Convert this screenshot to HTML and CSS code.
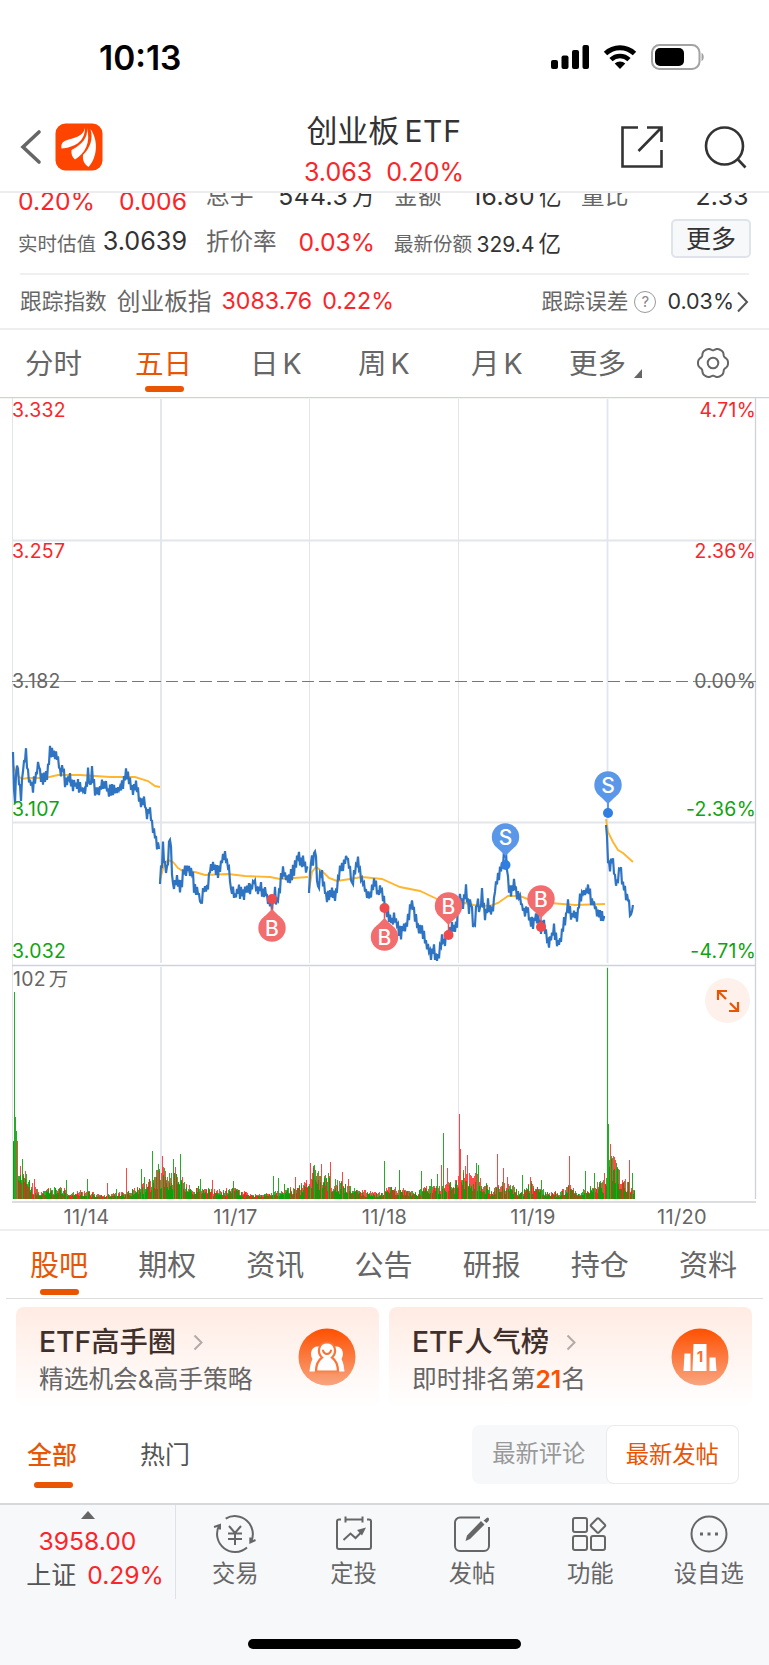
FILE: index.html
```
<!DOCTYPE html>
<html lang="zh-CN">
<head>
	<meta charset="UTF-8">
	<meta name="viewport" content="width=device-width, initial-scale=1.0">
	<title>创业板ETF</title>
	<link rel="stylesheet" href="styles.css">
</head>
<body>
	<div class="status">
		<span class="status__time">10:13</span>
		<div class="status__icons">
			<svg width="38" height="26" viewBox="0 0 38 26">
				<rect x="0" y="16" width="7" height="9" rx="2" />
				<rect x="10.5" y="11.500" width="7" height="13.500" rx="2" />
				<rect x="21" y="6" width="7" height="19" rx="2" />
				<rect x="31.500" y="1" width="6.500" height="24" rx="2" />
			</svg>
			<svg width="34" height="26" viewBox="0 0 34 26">
				<path d="M2.500 9.500a21 21 0 0 1 29 0" fill="none" stroke="#000" stroke-width="5" />
				<path d="M8 15.600a13 13 0 0 1 18 0" fill="none" stroke="#000" stroke-width="4.600" />
				<path d="M17 25l-5.300-5.400a7.800 7.800 0 0 1 10.600 0z" />
			</svg>
			<svg width="53" height="26" viewBox="0 0 53 26">
				<rect x="1" y="1" width="47.500" height="24" rx="7.500" fill="none" stroke="#a3a3a3" stroke-width="2" />
				<rect x="4" y="4" width="29" height="18" rx="5" />
				<path d="M50.500 9v8c3-1 3-7 0-8z" fill="#a3a3a3" />
			</svg>
		</div>
	</div>

	<header class="header">
		<div class="header__left">
			<svg width="22" height="36" viewBox="0 0 22 36">
				<path d="M19 3L3 18l16 15" fill="none" stroke="#666" stroke-width="3.600" stroke-linecap="round" />
			</svg>
			<svg width="48" height="48" viewBox="0 0 48 48">
				<rect x="0.500" y="0.500" width="47" height="47" rx="10" fill="#ff4400" />
				<path d="M30 5C28 14 18 15 11 17.500C7 19 6 21 6.500 25.500C19 24.500 30 19 30 5z" fill="#fff" />
				<path d="M32 5C33 14 28 21 16.500 27C16 31 17 34 20 36.500C30 30 36 20 32 5z" fill="#fff" />
				<path d="M35.500 6C38.500 16 35 25 28 32C27.500 37 29 41 33.500 44C42 35 44 18 35.500 6z" fill="#fff" />
			</svg>
		</div>
		<div class="header__title">
			<h1>创业板<span>ETF</span></h1>
			<p class="red"><span>3.063</span><span>0.20%</span></p>
		</div>
		<div class="header__right">
			<svg width="44" height="44" viewBox="0 0 44 44" fill="none" stroke="#333" stroke-width="2.600">
				<path d="M18 2.500H2.500v39h39V25M27 2.500h14.500V17M41.500 2.500L18.500 26" />
			</svg>
			<svg width="44" height="44" viewBox="0 0 44 44" fill="none" stroke="#333" stroke-width="2.600">
				<circle cx="20.500" cy="21" r="18.500" />
				<path d="M33.500 34l8 8.500" />
			</svg>
		</div>
	</header>

	<section class="quote">
		<div class="quote__row quote__row--top">
			<div class="cell cell--big red"><span>0.20%</span><span>0.006</span></div>
			<div class="cell"><label>总手</label><span>544.3<i>万</i></span></div>
			<div class="cell"><label>金额</label><span>16.80<i>亿</i></span></div>
			<div class="cell"><label>量比</label><span>2.33</span></div>
		</div>
		<div class="quote__row">
			<div class="cell cell--value"><label class="small">实时估值</label><span>3.0639</span></div>
			<div class="cell"><label>折价率</label><span class="red">0.03%</span></div>
			<div class="cell cell--share"><label class="small">最新份额</label><span>329.4<i>亿</i></span></div>
			<div class="cell cell--more"><button class="more">更多</button></div>
		</div>
	</section>
	<hr class="line">

	<section class="track">
		<div class="track__left">
			<label>跟踪指数</label>
			<span class="track__name">创业板指</span>
			<span class="red">3083.76</span>
			<span class="red">0.22%</span>
		</div>
		<div class="track__right">
			<label>跟踪误差</label>
			<span class="help">?</span>
			<span class="track__value">0.03%</span>
			<svg width="13" height="22" viewBox="0 0 13 22" fill="none" stroke="#555" stroke-width="2">
				<path d="M2 1.500L11 11L2 20.500" />
			</svg>
		</div>
	</section>

	<nav class="period">
		<a class="period__item">分时</a>
		<a class="period__item active">五日</a>
		<a class="period__item">日 K</a>
		<a class="period__item">周 K</a>
		<a class="period__item">月 K</a>
		<a class="period__item period__item--more">更多<svg width="8" height="9" viewBox="0 0 8 9"><path d="M8 0v9H0z" fill="#666" /></svg></a>
		<a class="period__item">
			<svg width="32" height="32" viewBox="-16 -16 32 32" fill="none" stroke="#666" stroke-width="2">
				<path id="gear" />
				<circle r="5.300" />
			</svg>
		</a>
	</nav>

	<section class="chart">
		<svg width="769" height="833" viewBox="0 397 769 833">
			<g class="grid">
				<path d="M12.500 397V1199M309.500 399V963M309.500 967V1199M458.500 399V963M458.500 967V1199" />
				<path class="grid__bold" d="M161 399V963M161 967V1199M607.500 399V963M607.500 967V1199M12 540.500H756M12 822.500H756" />
				<path class="grid__frame" d="M0 397.500H769M12 965.500H756M755.500 397V1199" />
				<path class="grid__frame" d="M12 1202H756" />
			</g>
			<path d="M64 681.500H694" stroke="#777" stroke-width="1.200" stroke-dasharray="12 5" />
			<path d="M12 681.500H64M694 681.500H756" stroke="#888" stroke-width="1.200" />
			<g id="volume"></g>
			<path id="average" class="average" />
			<path id="price" class="price" />
			<g id="marks"></g>
			<g class="axis">
				<text class="up" x="12" y="417">3.332</text>
				<text class="up" x="12" y="558">3.257</text>
				<text x="12" y="688">3.182</text>
				<text class="down" x="12" y="816">3.107</text>
				<text class="down" x="12" y="958">3.032</text>
				<text x="13" y="986">102<tspan dx="3">万</tspan></text>
				<text class="up end" x="756" y="417">4.71%</text>
				<text class="up end" x="756" y="558">2.36%</text>
				<text class="end" x="756" y="688">0.00%</text>
				<text class="down end" x="756" y="816">-2.36%</text>
				<text class="down end" x="756" y="958">-4.71%</text>
				<text class="date" x="86.500" y="1223.500">11/14</text>
				<text class="date" x="235.500" y="1223.500">11/17</text>
				<text class="date" x="384.500" y="1223.500">11/18</text>
				<text class="date" x="533" y="1223.500">11/19</text>
				<text class="date" x="682" y="1223.500">11/20</text>
			</g>
		</svg>
		<button class="expand">
			<svg width="24" height="24" viewBox="0 0 24 24" fill="none" stroke="#ea5504" stroke-width="2.200">
				<path d="M2 11V2H11M2.500 2.500L10 10M22 13V22H13M21.500 21.500L14 14" />
			</svg>
		</button>
	</section>

	<nav class="sections">
		<a class="sections__item active">股吧</a>
		<a class="sections__item">期权</a>
		<a class="sections__item">资讯</a>
		<a class="sections__item">公告</a>
		<a class="sections__item">研报</a>
		<a class="sections__item">持仓</a>
		<a class="sections__item">资料</a>
	</nav>

	<section class="cards">
		<div class="card">
			<div>
				<h2>ETF高手圈<svg width="10" height="17" viewBox="0 0 10 17"><path d="M1.500 1.500l7 7-7 7" fill="none" stroke="#b3aaa7" stroke-width="2" /></svg></h2>
				<p>精选机会&amp;高手策略</p>
			</div>
			<svg width="58" height="58" viewBox="0 0 58 58">
				<defs>
					<linearGradient id="orange" x1="0" y1="0" x2="0" y2="1">
						<stop offset="0" stop-color="#ff5000" />
						<stop offset="1" stop-color="#f8a580" />
					</linearGradient>
				</defs>
				<circle cx="29" cy="29" r="28.500" fill="url(#orange)" />
				<path d="M20 18.500c-6-.500-9 7-5.500 12.500-2 4-2.500 8-3 12.500h35c-.500-4.500-1-8.500-3-12.500C47 25.500 44 18 38 18.500z" fill="#fff" />
				<path d="M24 29.500C19 25 20 14.500 29 14.500s10 10.500 5 15c4 3 6 8 6 14H18c0-6 2-11 6-14z" fill="#fff" stroke="#fc7438" stroke-width="2.200" />
				<path d="M17 44.500h24" stroke="#fa8a58" stroke-width="2" />
				<path d="M25 22.500c1 4.500 7 4.500 8 0" fill="none" stroke="#fb6f30" stroke-width="2" stroke-linecap="round" />
			</svg>
		</div>
		<div class="card">
			<div>
				<h2>ETF人气榜<svg width="10" height="17" viewBox="0 0 10 17"><path d="M1.500 1.500l7 7-7 7" fill="none" stroke="#b3aaa7" stroke-width="2" /></svg></h2>
				<p>即时排名第<b>21</b>名</p>
			</div>
			<svg width="58" height="58" viewBox="0 0 58 58">
				<circle cx="29" cy="29" r="28.500" fill="url(#orange)" />
				<path d="M13.500 25.500h6V43h-7zM22.500 16h13v27h-14zM38.500 29.500h6l1 13.500h-7z" fill="#fff" />
				<text class="rank" x="29" y="34">1</text>
			</svg>
		</div>
	</section>

	<section class="filter">
		<nav class="filter__tabs">
			<a class="active">全部</a>
			<a>热门</a>
		</nav>
		<div class="switch">
			<span>最新评论</span>
			<span class="switch__on">最新发帖</span>
		</div>
	</section>

	<footer class="bottom">
		<div class="bottom__row">
			<div class="index">
				<svg width="14" height="8" viewBox="0 0 14 8"><path d="M7 0l7 8H0z" fill="#666" /></svg>
				<p class="red">3958.00</p>
				<p>上证 <span class="red">0.29%</span></p>
			</div>
			<div class="actions">
				<a class="action">
					<svg width="44" height="40" viewBox="0 0 44 40">
						<path d="M12.700 4.600A18 18 0 0 1 38.200 27.600M34 33.400A18 18 0 0 1 6 11.800M1 13l6-2v4.500M37.300 23.500V28.500L42.500 26" />
						<path d="M16 12l6 7 6-7M22 19v12M15 19.500h14M15 25h14" />
					</svg>
					交易
				</a>
				<a class="action">
					<svg width="44" height="40" viewBox="0 0 44 40">
						<path d="M9 5.500H7a2 2 0 0 0-2 2V33a2 2 0 0 0 2 2h30a2 2 0 0 0 2-2V7.500a2 2 0 0 0-2-2h-2M13.500 2.500v6M30.500 2.500v6M14 5.500h16" />
						<path d="M11.500 26l7-6.500 5 4.500 8-8" />
						<path d="M25 16l9-2.500-4 8z" fill="#666" stroke="none" />
					</svg>
					定投
				</a>
				<a class="action">
					<svg width="44" height="40" viewBox="0 0 44 40">
						<path d="M30 3.500H10a5 5 0 0 0-5 5V32a5 5 0 0 0 5 5h24a5 5 0 0 0 5-5V13" />
						<path d="M31 7l3.500 3.500L20 25l-4.500 2L17 21.500zM35 5.500c1-1 1.500-2 3-2 1.500 1 1 2.500.500 3.500L36.500 9 33.500 6.500z" fill="#666" stroke="none" />
					</svg>
					发帖
				</a>
				<a class="action">
					<svg width="44" height="40" viewBox="0 0 44 40">
						<rect x="5" y="4" width="14" height="14" rx="2" />
						<rect x="5" y="22" width="14" height="14" rx="2" />
						<rect x="23" y="22" width="14" height="14" rx="2" />
						<rect x="24.500" y="6" width="11" height="11" rx="1.500" transform="rotate(45 30 11.500)" />
					</svg>
					功能
				</a>
				<a class="action">
					<svg width="44" height="40" viewBox="0 0 44 40">
						<circle cx="22" cy="20" r="17.500" />
						<path d="M13 20h3M20.500 20h3M28 20h3" stroke-width="3" />
					</svg>
					设自选
				</a>
			</div>
		</div>
		<div class="home"></div>
	</footer>
	<script src="chart.js"></script>
</body>
</html>
```
FILE: styles.css
```
*,
*::before,
*::after {
	box-sizing: border-box;
	margin: 0;
	padding: 0;
	border: none;
}

body {
	width: 769px;
	font-family: Inter, "Noto Sans CJK SC", sans-serif;
	font-size: 24px;
	line-height: 1;
	color: #333;
	background-color: #fff;
}

svg {
	display: block;
	flex-shrink: 0;
}

h1,
h2,
i,
button {
	font-family: inherit;
	font-weight: inherit;
	font-size: inherit;
	font-style: normal;
}

a,
label,
span {
	white-space: nowrap;
}

.red {
	color: #fb2529;
}

/* status bar */
.status {
	height: 108px;
	padding: 38px 65px 0 99px;
	display: flex;
	justify-content: space-between;
}

.status__time {
	font-size: 33.500px;
	font-weight: 600;
	line-height: 40px;
	color: #000;
}

.status__icons {
	display: flex;
	gap: 14px;
	padding-top: 6px;
}

/* header */
.header {
	height: 85px;
	padding: 0 21px 0 20px;
	display: grid;
	grid-template-columns: 1fr auto 1fr;
	border-bottom: 2px solid #ececee;
}

.header__left,
.header__right {
	display: flex;
	align-items: center;
	padding-bottom: 5px;
}

.header__left {
	gap: 13px;
}

.header__right {
	justify-content: flex-end;
	gap: 40px;
}

.header__title {
	text-align: center;
}

.header__title h1 {
	height: 50px;
	padding-top: 7px;
	font-size: 31px;
	line-height: 32px;
}

.header__title h1 span {
	margin-left: 5px;
	font-size: 30px;
	letter-spacing: 0.7px;
}

.header__title p {
	display: flex;
	justify-content: center;
	gap: 14px;
	font-size: 25px;
	line-height: 29px;
}

/* quote */
.quote {
	height: 80px;
	padding: 0 17px 0 18px;
	overflow: hidden;
}

.quote__row {
	height: 46px;
	display: grid;
	grid-template-columns: 169px 169px 168px 168px;
	column-gap: 19px;
	align-items: center;
}

.quote__row--top {
	margin-top: -20px;
}

.cell {
	display: flex;
	justify-content: space-between;
	align-items: center;
	font-size: 24.700px;
}

.cell label {
	color: #666;
	font-size: 23.5px;
}

.cell i {
	margin-left: 4px;
	font-size: 22.500px;
}

.cell--big {
	padding-top: 11px;
}

.quote__row--top .cell:not(.cell--big) {
	font-size: 24.700px;
	letter-spacing: 0.4px;
}

.cell--value {
	font-size: 25.200px;
}

.cell .small {
	font-size: 19.5px;
	padding-top: 5px;
}

.cell--share {
	padding-right: 1px;
}

.cell--share span {
	font-size: 21px;
	padding-top: 4px;
}

.cell--more {
	justify-content: flex-end;
	padding-bottom: 7px;
	margin-right: -2px;
}

.more {
	width: 80px;
	height: 39px;
	font-size: 25px;
	line-height: 34px;
	color: #333;
	background-color: #f7f8fa;
	border: 2px solid #e0e4ea;
	border-radius: 5px;
}

.line {
	height: 2px;
	margin: 0 20px;
	background-color: #f0f0f0;
}

/* tracked index */
.track {
	height: 55px;
	padding: 0 20px;
	display: flex;
	justify-content: space-between;
	border-bottom: 2px solid #eee;
}

.track__left,
.track__right {
	display: flex;
	align-items: center;
	color: #666;
	font-size: 23.200px;
}

.track label {
	font-size: 21.700px;
}

.track__left {
	gap: 10px;
}

.track .red {
	color: #fb2529;
}

.track__name {
	font-size: 23.700px;
}

.track__right {
	gap: 6px;
}

.help {
	width: 22px;
	height: 22px;
	border: 1.500px solid #999;
	border-radius: 50%;
	font-size: 15px;
	line-height: 19px;
	text-align: center;
	color: #888;
}

.track__value {
	margin: 0 -4px 0 5px;
	font-size: 21.500px;
	color: #333;
}

/* chart period tabs */
.period {
	height: 67px;
	padding: 0 40px 0 25px;
	display: grid;
	grid-template-columns: 110px 115px 108px 113px 98px 1fr auto;
	font-size: 28.500px;
	word-spacing: -4px;
	color: #666;
}

.period__item {
	display: flex;
	flex-direction: column;
	align-items: flex-start;
	padding-top: 17px;
	line-height: 33px;
}

.period__item.active {
	color: #ea5504;
}

.active::after {
	content: "";
	display: block;
	width: 39px;
	height: 6px;
	border-radius: 3px;
	background-color: #ea5504;
}

.period .active::after {
	margin: 6px 0 0 10px;
}

.period__item--more {
	flex-direction: row;
	gap: 8px;
}

.period__item--more svg {
	margin-top: 22px;
}

/* chart */
.chart {
	position: relative;
	height: 834px;
	border-bottom: 2px solid #eee;
}

.grid {
	fill: none;
	stroke: #e3e5ed;
	stroke-width: 1;
}

.grid__bold {
	stroke-width: 1.800;
}

.grid__frame {
	stroke: #cfd2da;
	stroke-width: 1.300;
}

.price {
	fill: none;
	stroke: #2f74c3;
	stroke-width: 2.200;
}

.average {
	fill: none;
	stroke: #ffb62e;
	stroke-width: 1.900;
}

.axis {
	font-size: 19.400px;
	letter-spacing: 0.3px;
	fill: #666;
}

.axis .up {
	fill: #fb2529;
}

.axis .down {
	fill: #0fa30f;
}

.axis .end {
	text-anchor: end;
}

.axis .date {
	font-size: 20px;
	text-anchor: middle;
}

.mark {
	font-size: 21px;
	font-weight: 500;
	text-anchor: middle;
	fill: #fff;
}

.expand {
	position: absolute;
	left: 705px;
	top: 581px;
	width: 45px;
	height: 45px;
	border-radius: 50%;
	background-color: #fef1eb;
	display: flex;
	align-items: center;
	justify-content: center;
}

/* section tabs */
.sections {
	height: 68px;
	margin: 0 6px;
	padding: 0 26px 0 24px;
	display: flex;
	justify-content: space-between;
	border-bottom: 1px solid #ddd;
	font-size: 29px;
	color: #666;
}

.sections__item {
	padding-top: 18px;
	line-height: 34px;
}

.sections .active {
	color: #ea5504;
}

.sections .active::after {
	margin: 6px 0 0 10px;
}

/* cards */
.cards {
	padding: 8px 17px 0 16px;
	display: grid;
	grid-template-columns: 1fr 1fr;
	gap: 10px;
	height: 109px;
}

.card {
	display: flex;
	justify-content: space-between;
	padding: 19px 23px 0 23px;
	border-radius: 8px;
	background: linear-gradient(#ffebe3, #fff);
}

.card > svg {
	margin-top: 2px;
}

.card h2 {
	display: flex;
	align-items: center;
	font-size: 28.300px;
	font-weight: 500;
	line-height: 32px;
	color: #40302b;
}

.card h2 svg {
	margin-left: 17px;
}

.card p {
	margin-top: 5px;
	font-size: 24.700px;
	line-height: 32px;
	color: #666;
}

.card b {
	font-weight: 600;
	color: #ff5000;
}

.rank {
	font-size: 15px;
	font-weight: 700;
	text-anchor: middle;
	fill: #fb6f30;
}

/* posts filter */
.filter {
	height: 95px;
	padding: 17px 30px 0 27px;
	display: flex;
	justify-content: space-between;
}

.filter__tabs {
	display: flex;
	gap: 63px;
	font-size: 25px;
	line-height: 30px;
	color: #555;
	padding-top: 15px;
}

.filter__tabs .active {
	font-weight: 500;
	color: #ea5504;
}

.filter__tabs .active::after {
	margin: 12px 0 0 7px;
}

.switch {
	width: 267px;
	height: 59px;
	display: flex;
	font-size: 23.300px;
	line-height: 58px;
	color: #999;
	background-color: #f7f8fa;
	border-radius: 8px;
}

.switch span {
	width: 134px;
	text-align: center;
}

.switch .switch__on {
	color: #ea5504;
	background-color: #fff;
	border: 1.500px solid #ebebed;
	border-radius: 8px;
}

/* bottom bar */
.bottom {
	height: 162px;
	background-color: #f7f8fa;
	border-top: 2px solid #d5d8dd;
}

.bottom__row {
	display: flex;
	height: 94px;
}

.index {
	width: 176px;
	border-right: 1px solid #dfe1e6;
	display: flex;
	flex-direction: column;
	align-items: center;
	padding-top: 6px;
	font-size: 25px;
	color: #555;
}

.index p {
	line-height: 34px;
}

.index .red {
	font-size: 24.700px;
}

.index svg + p {
	margin-top: 5px;
}

.index p:last-child {
	padding-left: 15px;
}

.index span {
	margin-left: 4px;
}

.actions {
	flex: 1;
	display: grid;
	grid-template-columns: repeat(5, 118.400px);
}

.action {
	display: flex;
	flex-direction: column;
	align-items: center;
	padding-top: 9px;
	font-size: 23.300px;
	line-height: 30px;
	color: #666;
}

.action svg {
	margin-bottom: 5px;
	fill: none;
	stroke: #666;
	stroke-width: 2;
}

.home {
	width: 273px;
	height: 10px;
	margin: 40px auto 0;
	border-radius: 5px;
	background-color: #000;
}
```
FILE: chart.js
```
const NS = 'http://www.w3.org/2000/svg'

// one array per trading day: x, y, x, y...
const price = [
	[13, 752, 14, 790, 15, 797, 17, 762, 19, 783, 21, 797, 23, 770, 26, 753, 28, 775, 30, 783, 33, 786, 35, 779, 37, 772, 39, 764, 41, 780, 44, 778, 47, 775, 50, 752, 53, 755, 56, 753, 58, 758, 60, 775, 63, 769, 65, 782, 69, 776, 72, 785, 78, 785, 82, 790, 86, 791, 88, 771, 90, 786, 92, 771, 95, 790, 100, 789, 104, 784, 108, 791, 114, 789, 120, 789, 123, 782, 126, 774, 130, 780, 133, 789, 136, 782, 139, 795, 141, 804, 144, 800, 147, 815, 149, 810, 152, 823, 155, 835, 157, 848, 160, 848],
	[160, 884, 163, 848, 165, 868, 167, 870, 170, 836, 173, 885, 177, 880, 180, 889, 184, 872, 188, 868, 192, 870, 194, 886, 198, 891, 201, 904, 204, 888, 208, 886, 210, 868, 214, 868, 218, 872, 221, 862, 223, 856, 225, 857, 229, 869, 231, 890, 235, 896, 238, 890, 241, 893, 244, 894, 248, 888, 251, 893, 254, 879, 257, 890, 261, 889, 265, 892, 268, 898, 272, 907, 275, 892, 277, 904, 280, 886, 282, 872, 285, 876, 289, 880, 292, 874, 295, 867, 298, 853, 300, 862, 303, 860, 306, 868, 308, 867],
	[309, 893, 311, 857, 313, 863, 315, 850, 318, 888, 321, 872, 324, 885, 326, 897, 329, 895, 332, 890, 335, 900, 338, 878, 341, 868, 344, 863, 347, 856, 350, 868, 352, 885, 355, 868, 358, 861, 361, 878, 364, 885, 367, 894, 370, 897, 374, 880, 378, 893, 381, 885, 384, 902, 386, 912, 390, 918, 393, 922, 395, 916, 398, 928, 401, 933, 404, 925, 407, 924, 410, 908, 412, 902, 415, 915, 419, 930, 422, 932, 425, 940, 428, 947, 431, 957, 434, 950, 437, 959, 440, 950, 442, 937, 445, 945, 447, 930, 449, 934, 452, 928, 455, 925, 457, 925, 458, 905, 460, 897, 463, 905, 466, 889, 469, 910, 471, 900, 474, 930, 477, 902, 480, 912, 482, 893, 485, 915, 488, 905, 491, 913, 493, 908, 495, 890, 498, 878, 501, 868, 504, 856, 506, 856, 508, 882, 511, 893, 514, 883, 517, 893, 519, 893, 522, 907, 525, 913, 527, 905, 530, 920, 533, 923, 536, 915, 539, 920, 541, 928, 544, 925, 548, 943, 551, 938, 554, 928, 557, 943, 560, 942, 563, 925, 566, 915, 568, 904, 571, 916, 574, 912, 577, 917, 580, 900, 583, 890, 586, 894, 588, 886, 591, 900, 594, 905, 597, 910, 600, 913, 603, 917, 605, 917],
	[606, 825, 608, 860, 610, 868, 612, 857, 614, 872, 617, 886, 620, 867, 623, 886, 626, 894, 629, 902, 631, 917, 633, 905]
]
const average = [
	[13, 765, 17, 775, 22, 779, 28, 778, 45, 778, 58, 775, 80, 775, 110, 777, 135, 777, 148, 781, 155, 786, 160, 787],
	[160, 880, 164, 865, 168, 860, 173, 862, 178, 868, 183, 871, 195, 872, 205, 875, 228, 874, 245, 876, 270, 877, 280, 879, 308, 877],
	[309, 890, 312, 872, 316, 867, 322, 871, 329, 878, 337, 881, 350, 879, 362, 877, 382, 879, 400, 887, 420, 891, 435, 898, 445, 903, 457, 904, 465, 903, 474, 905, 490, 906, 498, 903, 508, 896, 520, 896, 530, 900, 550, 903, 575, 905, 605, 904],
	[606, 819, 608, 832, 613, 842, 618, 850, 623, 853, 633, 862]
]
// usual height of the volume bars
const level = [13, 60, 18, 34, 23, 34, 30, 16, 40, 8, 50, 11, 58, 13, 70, 7, 87, 9, 100, 4, 125, 8, 140, 12, 157, 28, 165, 30, 173, 28, 185, 16, 200, 12, 220, 9, 235, 11, 250, 5, 270, 6, 285, 10, 305, 16, 312, 32, 328, 22, 345, 15, 360, 9, 378, 6, 390, 13, 415, 7, 430, 14, 445, 17, 456, 18, 462, 32, 478, 25, 490, 10, 500, 16, 510, 16, 520, 6, 531, 17, 545, 8, 560, 7, 568, 15, 578, 6, 585, 12, 604, 20, 611, 45, 622, 22, 634, 12]
const spikes = [
	[14, 207, 'g'], [15, 82, 'g'], [16, 68, 'g'], [17, 58, 'r'], [22, 40, 'g'], [34, 20, 'r'], [66, 19, 'g'], [87, 20, 'g'], [107, 16, 'r'], [116, 10, 'g'], [126, 31, 'r'],
	[141, 30, 'g'], [144, 22, 'g'], [152, 48, 'g'], [158, 35, 'g'], [162, 43, 'r'], [173, 40, 'g'], [175, 32, 'r'], [180, 45, 'g'], [182, 22, 'r'], [200, 20, 'g'], [212, 19, 'r'],
	[233, 18, 'g'], [273, 23, 'g'], [278, 21, 'g'], [284, 15, 'g'], [295, 22, 'r'], [310, 36, 'r'], [314, 34, 'g'], [321, 35, 'r'], [328, 26, 'g'], [330, 37, 'r'], [342, 27, 'r'],
	[348, 20, 'r'], [384, 38, 'g'], [399, 29, 'g'], [421, 28, 'g'], [431, 20, 'g'], [437, 25, 'g'], [441, 34, 'r'], [443, 66, 'g'], [447, 31, 'r'], [459, 85, 'r'], [460, 50, 'r'],
	[467, 44, 'r'], [476, 36, 'g'], [478, 34, 'g'], [497, 45, 'r'], [503, 31, 'r'], [507, 22, 'r'], [522, 24, 'g'], [530, 22, 'r'], [541, 19, 'g'], [569, 43, 'r'], [585, 28, 'g'],
	[594, 26, 'g'], [604, 26, 'r'], [607, 231, 'g'], [608, 75, 'g'], [610, 55, 'r'], [616, 36, 'g'], [629, 39, 'r'], [632, 26, 'g']
]
const marks = [
	['B', 272, 899, 928], ['B', 384.5, 908, 937], ['B', 448.5, 935, 906],
	['S', 505.5, 865, 837], ['B', 541, 927, 899], ['S', 608, 813, 785]
]

let seed = 14
function random() {
	seed = (seed * 16807) % 2147483647
	return seed / 2147483647
}

function add(parent, name, attrs, text) {
	const el = document.createElementNS(NS, name)
	for (const key in attrs) el.setAttribute(key, attrs[key])
	if (text) el.textContent = text
	parent.appendChild(el)
}

// value of a x,y,x,y... line at x
function valueAt(points, x) {
	for (let i = 0; i < points.length - 2; i += 2) {
		if (x <= points[i + 2]) {
			const t = (x - points[i]) / (points[i + 2] - points[i])
			return points[i + 1] + t * (points[i + 3] - points[i + 1])
		}
	}
	return points[points.length - 1]
}

// small tick noise between the points
function noisyPath(points) {
	let d = ''
	let side = 1
	const last = points[points.length - 2]
	for (let x = points[0]; x <= last; x += 1) {
		const noise = x === points[0] || x > last - 2 ? 0 : side * (1 + random() * 6)
		d += (d ? 'L' : 'M') + x + ' ' + (valueAt(points, x) + noise).toFixed(1)
		side = -side
	}
	return d
}

document.getElementById('price').setAttribute('d', price.map(noisyPath).join(''))
document.getElementById('average').setAttribute('d', average.map(day => 'M' + day.join(' ')).join(''))

const volume = document.getElementById('volume')
function bar(x, h, color) {
	add(volume, 'rect', { x: x, y: 1199 - h, width: 1, height: h, fill: color })
}
for (let x = 13; x < 635; x++) {
	const h = valueAt(level, x)
	const red = Math.round(h * (0.35 + random() * 0.75))
	const green = Math.round(h * (0.3 + random() * 0.75))
	const low = Math.min(red, green)
	bar(x, Math.max(red, green), red > green ? '#ff4a4a' : '#2fae2f')
	bar(x, low, random() > 0.4 ? '#159a0a' : (random() > 0.35 ? '#fb2525' : '#6f6a10'))
}
spikes.forEach(([x, h, c]) => bar(x, h, c === 'r' ? '#ff4444' : '#25ab25'))

const layer = document.getElementById('marks')
marks.forEach(([letter, x, dot, pin]) => {
	const fill = letter === 'B' ? '#f26d6d' : '#5a97e8'
	const strong = letter === 'B' ? '#ef4a4d' : '#2f7ee0'
	const dir = pin > dot ? -1 : 1
	add(layer, 'path', { d: `M${x} ${dot}V${pin + dir * 16}`, stroke: strong, 'stroke-width': 1.5 })
	add(layer, 'path', { d: `M${x - 8} ${pin + dir * 11}L${x} ${pin + dir * 19}L${x + 8} ${pin + dir * 11}z`, fill: fill })
	add(layer, 'circle', { cx: x, cy: pin, r: 13.7, fill: fill })
	add(layer, 'circle', { cx: x, cy: dot, r: 5, fill: strong })
	add(layer, 'text', { x: x, y: pin + 7.5, class: 'mark' }, letter)
})

// gear outline, six wide teeth
let gear = ''
for (let a = 0; a < 360; a += 4) {
	const rad = a * Math.PI / 180
	const dip = (1 - Math.cos(rad * 6)) / 2
	const r = 15 - dip * dip * 2.2
	gear += (gear ? 'L' : 'M') + (r * Math.cos(rad)).toFixed(2) + ' ' + (r * Math.sin(rad)).toFixed(2)
}
document.getElementById('gear').setAttribute('d', gear + 'z')
```
